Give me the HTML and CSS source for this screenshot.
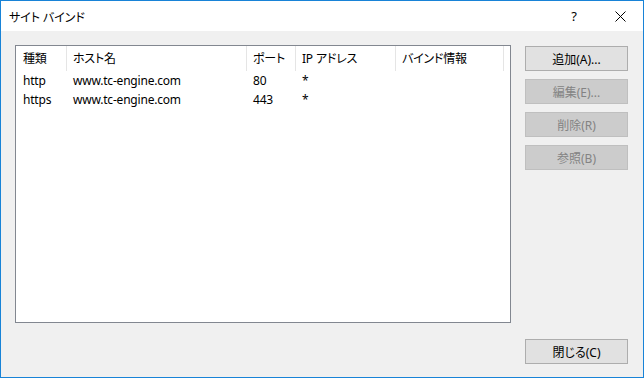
FILE: index.html
```html
<!DOCTYPE html>
<html lang="ja">

<head>
  <meta charset="UTF-8">
  <title>サイト バインド</title>
  <link rel="stylesheet" href="styles.css">
</head>

<body>
  <div class="window">
    <div class="titlebar">
      <span class="title">サイト バインド</span>
      <span class="help">?</span>
      <span class="close">
        <svg width="11" height="11" viewBox="0 0 11 11">
          <path d="M0.5 0.5 L10.5 10.5 M10.5 0.5 L0.5 10.5" stroke="#000" stroke-width="1" fill="none" />
        </svg>
      </span>
    </div>

    <div class="content">
      <div class="main">
        <div class="listbox">
          <div class="row head">
            <div class="cell">種類</div>
            <div class="cell">ホスト名</div>
            <div class="cell">ポート</div>
            <div class="cell">IP アドレス</div>
            <div class="cell">バインド情報</div>
          </div>
          <div class="row">
            <div class="cell">http</div>
            <div class="cell">www.tc-engine.com</div>
            <div class="cell">80</div>
            <div class="cell">*</div>
            <div class="cell"></div>
          </div>
          <div class="row">
            <div class="cell">https</div>
            <div class="cell">www.tc-engine.com</div>
            <div class="cell">443</div>
            <div class="cell">*</div>
            <div class="cell"></div>
          </div>
        </div>

        <div class="buttons">
          <button class="btn">追加(A)...</button>
          <button class="btn" disabled>編集(E)...</button>
          <button class="btn" disabled>削除(R)</button>
          <button class="btn" disabled>参照(B)</button>
        </div>
      </div>

      <div class="footer">
        <button class="btn">閉じる(C)</button>
      </div>
    </div>
  </div>
</body>

</html>
```

FILE: styles.css
```css
* {
  box-sizing: border-box;
}

html,
body {
  margin: 0;
  padding: 0;
}

body {
  font-family: 'Noto Sans', 'Noto Sans CJK JP', sans-serif;
  font-size: 12px;
  color: #000;
  background-color: #fff;
  font-feature-settings: "palt";
}

.window {
  width: 644px;
  height: 378px;
  border: 1px solid #1883d7;
  display: flex;
  flex-direction: column;
  background-color: #f0f0f0;
}

.titlebar {
  height: 30px;
  background-color: #fff;
  display: flex;
  align-items: center;
  padding-left: 8px;
}

.title {
  flex: 1;
  font-family: 'Noto Sans CJK JP', sans-serif;
}

.help {
  width: 46px;
  text-align: center;
  font-size: 13px;
}

.close {
  width: 46px;
  display: flex;
  justify-content: center;
  align-items: center;
}

.content {
  flex: 1;
  display: flex;
  flex-direction: column;
  padding: 14px 14px 13px 14px;
}

.main {
  flex: 1;
  display: flex;
  gap: 14px;
}

.listbox {
  width: 496px;
  height: 278px;
  background-color: #fff;
  border: 1px solid #828790;
}

.row {
  display: grid;
  grid-template-columns: 51px 180px 49px 100px 108px;
  height: 19px;
  align-items: center;
}

.row.head {
  height: 25px;
  align-items: stretch;
}

.cell {
  padding-left: 6px;
  white-space: nowrap;
  line-height: 19px;
  letter-spacing: -0.2px;
}

.cell:first-child {
  padding-left: 7px;
}

.head .cell {
  border-right: 1px solid #e5e5e5;
  display: flex;
  align-items: center;
  padding-bottom: 1px;
}

.buttons {
  display: flex;
  flex-direction: column;
  gap: 8px;
  padding-top: 1px;
}

.btn {
  width: 103px;
  height: 25px;
  font-family: 'Noto Sans', 'Noto Sans CJK JP', sans-serif;
  font-feature-settings: "palt";
  font-size: 12px;
  color: #000;
  background-color: #e1e1e1;
  border: 1px solid #adadad;
  padding: 0;
}

.btn:disabled {
  color: #838383;
  background-color: #cccccc;
  border-color: #bfbfbf;
}

.footer {
  display: flex;
  justify-content: flex-end;
  padding-right: 1px;
}
```
